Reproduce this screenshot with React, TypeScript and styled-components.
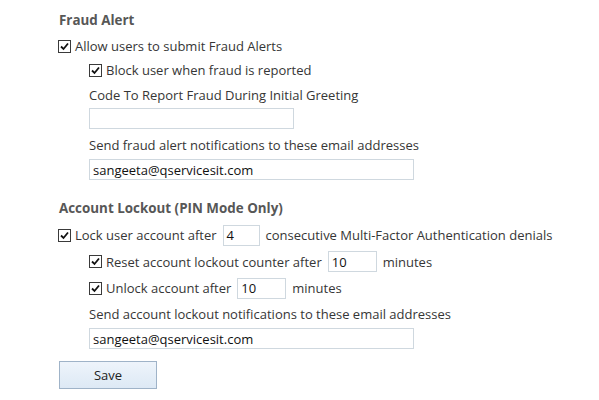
import React from "react";
import styled, { createGlobalStyle } from "styled-components";

const Global = createGlobalStyle`
  html, body { margin: 0; padding: 0; background: #ffffff; }
  body { font-family: "Open Sans", "Segoe UI", sans-serif; font-size: 13px; color: #363636; }
`;

const Page = styled.div`
  width: 599px;
  height: 400px;
  box-sizing: border-box;
  padding: 10px 0 0 58px;
  display: flex;
  flex-direction: column;
  align-items: flex-start;
`;

const Heading = styled.div<{ $top?: number }>`
  font-weight: 700;
  font-size: 13.4px;
  color: #575757;
  height: 20px;
  line-height: 20px;
  margin-top: ${(p) => p.$top ?? 0}px;
  padding-left: 1px;
`;

const Row = styled.div<{ $indent?: number; $h?: number; $top?: number }>`
  display: flex;
  align-items: center;
  height: ${(p) => p.$h ?? 24}px;
  margin-top: ${(p) => p.$top ?? 0}px;
  padding-left: ${(p) => p.$indent ?? 0}px;
  white-space: nowrap;
`;

const Box = styled.span`
  width: 11px;
  height: 11px;
  border: 1px solid #3a3a3a;
  background: #fff;
  display: inline-flex;
  align-items: center;
  justify-content: center;
  margin-right: 4px;
  flex: none;
`;

const Label = styled.span``;

const Field = styled.div<{ $w: number }>`
  width: ${(p) => p.$w}px;
  height: 21px;
  box-sizing: border-box;
  border: 1px solid #cfd8df;
  background: #fff;
  display: flex;
  align-items: center;
  padding-left: 3px;
  color: #111;
  flex: none;
`;

const InlineField = styled(Field)`
  margin: 0 6px 0 6px;
`;

const FieldRow = styled.div<{ $top?: number }>`
  padding-left: 31px;
  margin-top: ${(p) => p.$top ?? 0}px;
  display: flex;
`;

const SaveButton = styled.button`
  margin-top: 12px;
  margin-left: 1px;
  width: 98px;
  height: 28px;
  box-sizing: border-box;
  border: 1px solid #9fb3c8;
  background: linear-gradient(#eef4fb, #dde9f5);
  font-family: inherit;
  font-size: 13px;
  color: #222;
  padding: 0;
`;

const Check = () => (
  <Box>
    <svg width="9" height="9" viewBox="0 0 9 9">
      <path d="M1 4.5 L3.5 7 L8 1.5" stroke="#111" strokeWidth="1.8" fill="none" />
    </svg>
  </Box>
);

export default function App() {
  return (
    <>
      <Global />
      <Page>
        <Heading>Fraud Alert</Heading>
        <Row $top={4}>
          <Check />
          <Label>Allow users to submit Fraud Alerts</Label>
        </Row>
        <Row $indent={31}>
          <Check />
          <Label>Block user when fraud is reported</Label>
        </Row>
        <Row $indent={31} $h={26}>
          <Label>Code To Report Fraud During Initial Greeting</Label>
        </Row>
        <FieldRow>
          <Field $w={205} />
        </FieldRow>
        <Row $indent={31} $top={4}>
          <Label>Send fraud alert notifications to these email addresses</Label>
        </Row>
        <FieldRow $top={2}>
          <Field $w={325}>sangeeta@qservicesit.com</Field>
        </FieldRow>
        <Heading $top={18}>Account Lockout (PIN Mode Only)</Heading>
        <Row $h={26} $top={4}>
          <Check />
          <Label>Lock user account after</Label>
          <InlineField $w={37}>4</InlineField>
          <Label>consecutive Multi-Factor Authentication denials</Label>
        </Row>
        <Row $indent={31} $h={27}>
          <Check />
          <Label>Reset account lockout counter after</Label>
          <InlineField $w={49}>10</InlineField>
          <Label>minutes</Label>
        </Row>
        <Row $indent={31} $h={26}>
          <Check />
          <Label>Unlock account after</Label>
          <InlineField $w={49}>10</InlineField>
          <Label>minutes</Label>
        </Row>
        <Row $indent={31} $top={1}>
          <Label>Send account lockout notifications to these email addresses</Label>
        </Row>
        <FieldRow $top={2}>
          <Field $w={325}>sangeeta@qservicesit.com</Field>
        </FieldRow>
        <SaveButton>Save</SaveButton>
      </Page>
    </>
  );
}
